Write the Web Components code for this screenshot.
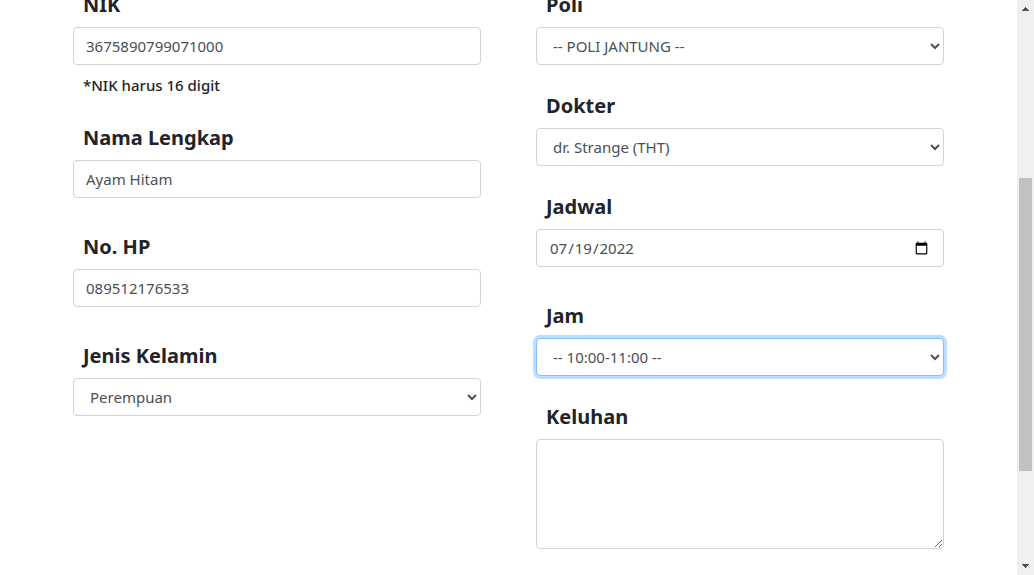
<!DOCTYPE html>
<html lang="id">
<head>
<meta charset="utf-8">
<title>Pendaftaran Pasien</title>
<style>
  body { margin: 0; background: #fff; font-family: "Noto Sans", "Open Sans", sans-serif; font-size: 15px; line-height: 24px; color: #212529; }
</style>
</head>
<body>
<patient-page>
  <form-column slot="form">
    <form-field label="NIK" name="nik" value="3675890799071000" hint="*NIK harus 16 digit"></form-field>
    <form-field label="Nama Lengkap" name="nama" value="Ayam Hitam" spaced></form-field>
    <form-field label="No. HP" name="hp" value="089512176533" spaced></form-field>
    <form-field label="Jenis Kelamin" name="kelamin" kind="select" value="Perempuan"></form-field>
  </form-column>
  <form-column slot="form">
    <form-field label="Poli" name="poli" kind="select" value="-- POLI JANTUNG --"></form-field>
    <form-field label="Dokter" name="dokter" kind="select" value="dr. Strange (THT)"></form-field>
    <form-field label="Jadwal" name="jadwal" kind="date" value="2022-07-19" spaced></form-field>
    <form-field label="Jam" name="jam" kind="select" value="-- 10:00-11:00 --" active></form-field>
    <form-field label="Keluhan" name="keluhan" kind="textarea" value=""></form-field>
  </form-column>
</patient-page>
<script>
class PatientPage extends HTMLElement {
  constructor() {
    super();
    this.attachShadow({ mode: "open" }).innerHTML = `
      <style>
        :host { display: flex; height: 100vh; overflow: hidden; }
        form { flex: 1; min-width: 0; display: grid; grid-template-columns: 1fr 1fr; align-items: start; gap: 55px; margin-top: -9px; padding: 0 73px; }
      </style>
      <form><slot name="form"></slot></form>
      <scroll-rail></scroll-rail>`;
  }
}
class FormColumn extends HTMLElement {
  constructor() {
    super();
    this.attachShadow({ mode: "open" }).innerHTML = `
      <style>:host { display: flex; flex-direction: column; min-width: 0; gap: 27px; }</style>
      <slot></slot>`;
  }
}
class FormField extends HTMLElement {
  connectedCallback() {
    if (this.shadowRoot) return;
    const root = this.attachShadow({ mode: "open" });
    root.innerHTML = `
      <style>
        :host { display: block; }
        :host([spaced]) { padding-bottom: 8px; }
        label { display: block; margin: 0 0 8px; padding-left: 10px; font-size: 20px; line-height: 28px; font-weight: 700; }
        .control { display: block; box-sizing: border-box; width: 100%; height: 38px; margin: 0; padding: 6px 12px; border: 1px solid #ced4da; border-radius: 4px; background: #fff; color: #495057; font: inherit; outline: none; }
        textarea.control { height: 110px; resize: vertical; }
        :host([active]) .control, .control:focus { border-color: #80bdff; box-shadow: 0 0 0 3px #bfdeff; }
        p { margin: 8px 0 0; padding-left: 10px; font-weight: 500; }
      </style>
      <label for="control"></label>`;
    root.querySelector("label").textContent = this.getAttribute("label");
    const kind = this.getAttribute("kind") || "text";
    const value = this.getAttribute("value");
    const tag = kind === "select" || kind === "textarea" ? kind : "input";
    const control = document.createElement(tag);
    control.id = "control";
    control.className = "control";
    control.name = this.getAttribute("name");
    if (tag === "select") control.add(new Option(value, value));
    if (tag === "input") control.type = kind;
    control.value = value;
    root.append(control);
    if (this.hasAttribute("hint")) {
      const hint = document.createElement("p");
      hint.id = "hint";
      hint.textContent = this.getAttribute("hint");
      control.setAttribute("aria-describedby", "hint");
      root.append(hint);
    }
  }
}
class ScrollRail extends HTMLElement {
  constructor() {
    super();
    this.attachShadow({ mode: "open" }).innerHTML = `
      <style>
        :host { display: flex; flex-direction: column; flex: none; width: 17px; background: #f0f0f0; }
        button { display: block; width: 17px; height: 17px; padding: 0; border: 0; background: none; }
        svg { display: block; }
        .track { flex: 1; display: grid; grid-template-rows: 161fr 293fr 87fr; padding: 0 2px; }
        .thumb { grid-row: 2; background: #c1c1c1; }
      </style>
      <button type="button" aria-label="Gulir ke atas"><svg width="17" height="17"><path d="M5 11h7v-1h-1v-1h-1v-1h-1v-1h-1v1h-1v1h-1v1h-1z" fill="#505050"/></svg></button>
      <div class="track"><div class="thumb"></div></div>
      <button type="button" aria-label="Gulir ke bawah"><svg width="17" height="17"><path d="M5 6h7v1h-1v1h-1v1h-1v1h-1v-1h-1v-1h-1v-1h-1z" fill="#505050"/></svg></button>`;
  }
}
customElements.define("scroll-rail", ScrollRail);
customElements.define("form-field", FormField);
customElements.define("form-column", FormColumn);
customElements.define("patient-page", PatientPage);
</script>
</body>
</html>
